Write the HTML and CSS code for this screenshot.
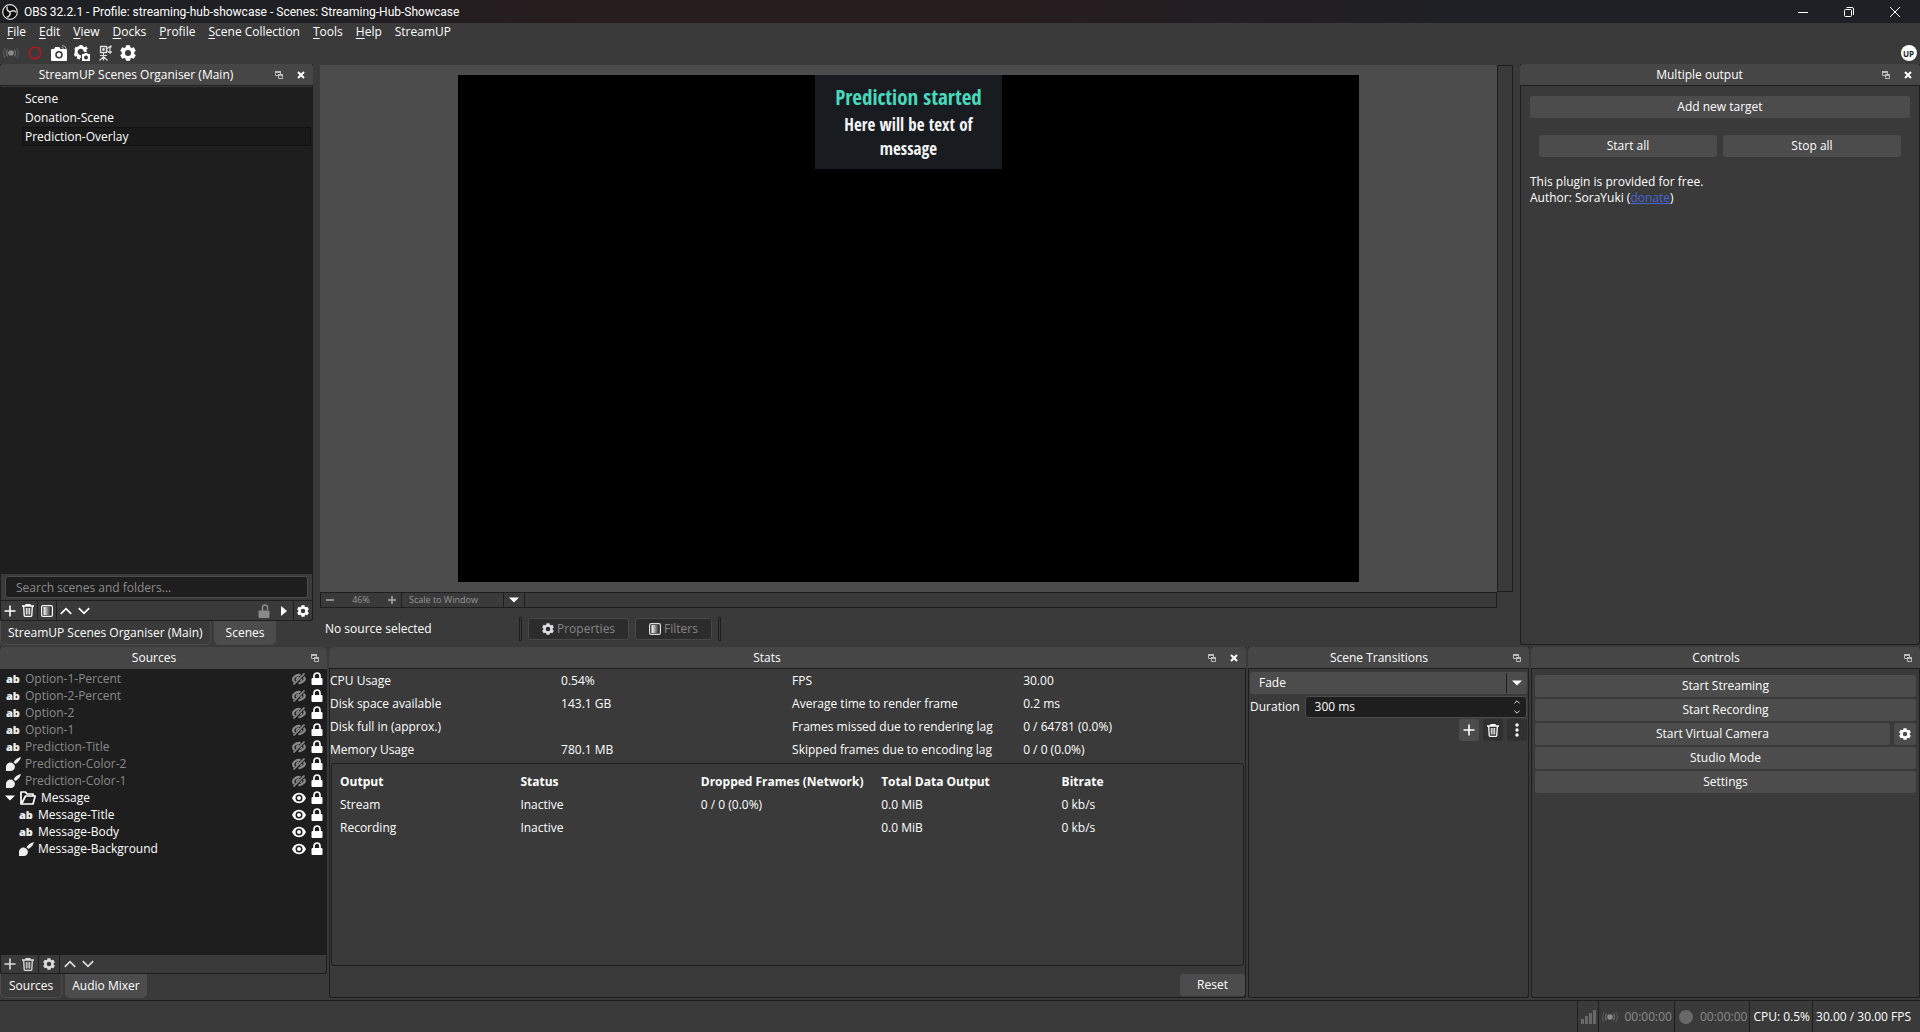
FILE: index.html
```html
<!DOCTYPE html>
<html lang="en">
<head>
<meta charset="utf-8">
<title>OBS 32.2.1 - Profile: streaming-hub-showcase - Scenes: Streaming-Hub-Showcase</title>
<link rel="stylesheet" href="styles.css">
</head>
<body>
<svg class="sprite" aria-hidden="true">
  <defs>
    <linearGradient id="fade"><stop offset="0" stop-color="#fff"/><stop offset="1" stop-color="#333"/></linearGradient>
    <symbol id="gear" viewBox="0 0 16 16"><path fill="currentColor" fill-rule="evenodd" d="M6 .2h4l.5 2.200 1.100.6 2.200-.7 2 3.400L14.200 7.200v1.600l1.600 1.500-2 3.400-2.200-.7-1.100.6-.5 2.200H6l-.5-2.200-1.100-.6-2.200.7-2-3.400 1.600-1.500V7.200L.2 5.700l2-3.400 2.200.7 1.100-.6zM8 5a3 3 0 1 0 0 6 3 3 0 0 0 0-6z"/></symbol>
    <symbol id="float" viewBox="0 0 8 8"><path fill="#bbb" d="M0 0h6v2H0z"/><path fill="none" stroke="#bbb" d="M.5 1v3.500H3M5.500 1v2"/><path fill="#bbb" d="M3 3h5v2H3z"/><path fill="none" stroke="#bbb" d="M3.500 4v3.500h4V4"/></symbol>
    <symbol id="close" viewBox="0 0 8 8"><path stroke="#fff" stroke-width="2" d="M1 1l6 6M7 1L1 7"/></symbol>
    <symbol id="plus" viewBox="0 0 12 12"><path stroke="currentColor" stroke-width="1.600" d="M6 .5v11M.5 6h11"/></symbol>
    <symbol id="trash" viewBox="0 0 12 13"><path fill="none" stroke="currentColor" stroke-width="1.300" d="M0 2h12M4 1.500V.7h4v.8M1.700 2.500l.5 9q0 .8.8.8h6q.8 0 .8-.8l.5-9"/><path stroke="currentColor" d="M4.300 4v6.500M6 4v6.500M7.700 4v6.500"/></symbol>
    <symbol id="filter" viewBox="0 0 12 12"><rect x=".6" y=".6" width="10.800" height="10.800" rx="1.500" fill="none" stroke="currentColor" stroke-width="1.200"/><path fill="url(#fade)" d="M2.500 2h7v8h-7z"/></symbol>
    <symbol id="up" viewBox="0 0 12 8"><path fill="none" stroke="currentColor" stroke-width="1.700" d="M.8 6.800L6 1.600l5.200 5.200"/></symbol>
    <symbol id="down" viewBox="0 0 12 8"><path fill="none" stroke="currentColor" stroke-width="1.700" d="M.8 1.200L6 6.400l5.200-5.200"/></symbol>
    <symbol id="caret" viewBox="0 0 10 6"><path fill="#fff" d="M0 .5h10L5 5.500z"/></symbol>
    <symbol id="lock" viewBox="0 0 12 13"><path fill="none" stroke="currentColor" stroke-width="1.700" d="M3 7V4a3 3 0 0 1 6 0v3"/><rect x=".5" y="6" width="11" height="7" rx="1" fill="currentColor"/></symbol>
    <symbol id="unlock" viewBox="0 0 12 14"><path fill="none" stroke="currentColor" stroke-width="1.500" d="M4.500 7V3.500a2.500 2.500 0 0 1 5 0V6"/><rect x=".5" y="6.500" width="11" height="7.500" rx="1" fill="currentColor"/></symbol>
    <symbol id="eye" viewBox="0 0 14 12"><path fill="currentColor" fill-rule="evenodd" d="M7 .8c3.500 0 5.800 2.400 7 5.200-1.200 2.800-3.500 5.200-7 5.200S1.200 8.800 0 6C1.200 3.200 3.500.8 7 .8zm0 1.700a3.500 3.500 0 1 0 0 7 3.500 3.500 0 0 0 0-7z"/><circle cx="7" cy="6" r="2" fill="currentColor"/></symbol>
    <symbol id="hidden" viewBox="0 0 14 12"><path fill="none" stroke="currentColor" stroke-width="2.200" d="M2.500 9C.5 7 .8 5.500 2.500 3.800S6.500 1.600 8.500 2M11.500 4Q14.200 6 11.500 8.200T6.500 10"/><path stroke="currentColor" stroke-width="1.700" d="M1.500 11.500L12.500.5"/><path fill="none" stroke="currentColor" stroke-width="1.500" d="M4.600 7q-.3-2.500 2.500-3M8.500 8l1.500-2"/></symbol>
    <symbol id="brush" viewBox="0 0 15 14"><path fill="currentColor" d="M15 0c-3 .6-5.600 2.600-7.400 5.200l2 1.900C12.200 5.200 14.500 2.900 15 0zM4.500 5.500C1.500 5.500 0 8 0 10v4h4c3.800 0 5.300-2.300 4.800-5.300C8 7 6.500 5.500 4.500 5.500z"/></symbol>
    <symbol id="folder" viewBox="0 0 16 14"><path fill="none" stroke="currentColor" stroke-width="1.700" stroke-linejoin="round" d="M13 5V3H7L5.500 1H1v12h12l2.200-8H5.500L2 12"/></symbol>
    <symbol id="live" viewBox="0 0 16 12"><circle cx="8" cy="6" r="2.800" fill="currentColor"/><path fill="none" stroke="currentColor" stroke-width="1.200" opacity=".6" d="M4.500 2.500q-2 3.500 0 7M11.500 2.500q2 3.500 0 7"/><path fill="none" stroke="currentColor" stroke-width="1.200" opacity=".35" d="M2.200 1q-3 5 0 10M13.800 1q3 5 0 10"/></symbol>
    <symbol id="camera" viewBox="0 0 16 16"><path fill="#fff" fill-rule="evenodd" d="M1 4h2l1.300-2h4L9.500 4H15q1 0 1 1v10q0 1-1 1H1q-1 0-1-1V5q0-1 1-1zm7 2a3.800 3.800 0 1 0 0 7.600A3.800 3.800 0 0 0 8 6z"/><circle cx="8" cy="9.800" r="2.200" fill="#fff"/><path fill="none" stroke="#aaa" d="M10.500 2.500q2 0 2.200 1.500M11 .5q4 0 4.500 4"/></symbol>
    <symbol id="gearcam" viewBox="0 0 16 16"><path fill="none" stroke="#fff" stroke-width="3" d="M6.800 11.500A4.600 4.600 0 1 1 11.300 7"/><path stroke="#fff" stroke-width="3" d="M7 3V0M3.500 4.500L1 3M3 8.500L.5 10.500M10.500 4L13 2.500M5.500 11l-1.500 3"/><path fill="#fff" fill-rule="evenodd" d="M8 9h2l.8-1h2.400l.8 1h2v7H8zm4 1.500a2 2 0 1 0 0 4 2 2 0 0 0 0-4z"/></symbol>
    <symbol id="stand" viewBox="0 0 14 16"><path fill="none" stroke="#ddd" stroke-width="1.300" d="M2.500 1.500h6v6h-6z"/><circle cx="5.500" cy="4.500" r="1.400" fill="#ddd"/><path fill="none" stroke="#ddd" stroke-width="1.200" d="M8.500 5.500l3.500 2.500V1.500L8.500 4M13 .5v2M13 6v2M5.500 7.500v8M2 10.500h7M1.500 15.500l4-4 4 4"/></symbol>
  </defs>
</svg>

<div class="app">
  <header class="titlebar">
    <svg class="logo" viewBox="0 0 16 16"><circle cx="8" cy="8" r="7.300" fill="#0c0c0c" stroke="#ddd" stroke-width="1.200"/><g fill="none" stroke="#ddd" stroke-width="1.500"><path id="blade" d="M5.200 2.600C4.300 5 5.500 7.300 8 8"/><path d="M5.200 2.600C4.300 5 5.500 7.300 8 8" transform="rotate(120 8 8)"/><path d="M5.200 2.600C4.300 5 5.500 7.300 8 8" transform="rotate(240 8 8)"/></g></svg>
    <h1>OBS 32.2.1 - Profile: streaming-hub-showcase - Scenes: Streaming-Hub-Showcase</h1>
    <div class="window-controls">
      <button aria-label="Minimize"><svg width="10" height="10"><path stroke="#fff" d="M0 5.500h10"/></svg></button>
      <button aria-label="Restore"><svg width="10" height="10"><rect x=".5" y="2.500" width="7" height="7" rx="1" fill="none" stroke="#fff"/><path fill="none" stroke="#fff" d="M2.500.5H8q1.500 0 1.500 1.500v6"/></svg></button>
      <button aria-label="Close"><svg width="10" height="10"><path stroke="#fff" d="M0 0l10 10M10 0L0 10"/></svg></button>
    </div>
  </header>

  <nav class="menubar">
    <button><u>F</u>ile</button><button><u>E</u>dit</button><button><u>V</u>iew</button><button><u>D</u>ocks</button><button><u>P</u>rofile</button><button><u>S</u>cene Collection</button><button><u>T</u>ools</button><button><u>H</u>elp</button><button>StreamUP</button>
  </nav>

  <div class="main-toolbar">
    <button class="dim wide" aria-label="Stream"><svg width="16" height="12"><use href="#live"/></svg></button>
    <button class="wide" aria-label="Record"><svg width="14" height="14"><circle cx="7" cy="7" r="5.700" fill="none" stroke="#c1121c" stroke-width="1.500"/></svg></button>
    <button aria-label="Screenshot"><svg width="16" height="16"><use href="#camera"/></svg></button>
    <button aria-label="Screenshot settings"><svg width="16" height="16"><use href="#gearcam"/></svg></button>
    <button aria-label="Virtual camera"><svg width="14" height="16"><use href="#stand"/></svg></button>
    <button aria-label="Settings"><svg width="16" height="16"><use href="#gear"/></svg></button>
    <button class="streamup" aria-label="StreamUP"><span>UP</span></button>
  </div>

  <main class="upper">
    <section class="side-column">
      <div class="dock scenes">
        <header class="dock-title"><h2>StreamUP Scenes Organiser (Main)</h2><button aria-label="Float"><svg width="8" height="8"><use href="#float"/></svg></button><button aria-label="Close"><svg width="8" height="8"><use href="#close"/></svg></button></header>
        <ul class="scene-list"><li>Scene</li><li>Donation-Scene</li><li class="selected">Prediction-Overlay</li></ul>
        <div class="search"><input type="text" placeholder="Search scenes and folders..." aria-label="Search scenes and folders"></div>
        <div class="dock-tools">
          <button aria-label="Add"><svg width="12" height="12"><use href="#plus"/></svg></button>
          <button aria-label="Remove"><svg width="12" height="13"><use href="#trash"/></svg></button>
          <i></i>
          <button aria-label="Filters"><svg width="12" height="12"><use href="#filter"/></svg></button>
          <i></i>
          <button aria-label="Up"><svg width="12" height="8"><use href="#up"/></svg></button>
          <button aria-label="Down"><svg width="12" height="8"><use href="#down"/></svg></button>
          <button class="push dim" aria-label="Lock"><svg width="12" height="14"><use href="#unlock"/></svg></button>
          <button aria-label="Transitions"><svg width="6" height="10"><path fill="#fff" d="M0 0l6 5-6 5z"/></svg></button>
          <i></i>
          <button aria-label="Settings"><svg width="12" height="12"><use href="#gear"/></svg></button>
        </div>
      </div>
      <div class="tabs"><button class="active">StreamUP Scenes Organiser (Main)</button><button>Scenes</button></div>
    </section>

    <section class="center">
      <div class="preview-row">
        <div class="preview-column">
          <div class="preview"><div class="canvas"><div class="overlay"><h3>Prediction started</h3><p>Here will be text of message</p></div></div></div>
          <div class="zoombar">
            <button aria-label="Zoom out"><svg width="8" height="8"><path stroke="#aaa" stroke-width="1.500" d="M0 4h8"/></svg></button>
            <output>46%</output>
            <button aria-label="Zoom in"><svg width="8" height="8"><path stroke="#aaa" stroke-width="1.500" d="M0 4h8M4 0v8"/></svg></button>
            <span class="scale">Scale to Window</span>
            <button class="scale-menu" aria-label="Scaling mode"><svg width="10" height="6"><use href="#caret"/></svg></button>
          </div>
        </div>
        <div class="vscroll"></div>
      </div>
      <div class="context">
        <span class="source-name">No source selected</span>
        <i></i>
        <button disabled><svg width="12" height="12"><use href="#gear"/></svg>Properties</button>
        <button disabled><svg width="12" height="12"><use href="#filter"/></svg>Filters</button>
        <i></i>
      </div>
    </section>

    <section class="dock outputs">
      <header class="dock-title"><h2>Multiple output</h2><button aria-label="Float"><svg width="8" height="8"><use href="#float"/></svg></button><button aria-label="Close"><svg width="8" height="8"><use href="#close"/></svg></button></header>
      <div class="outputs-body">
        <button class="btn">Add new target</button>
        <div class="pair"><button class="btn">Start all</button><button class="btn">Stop all</button></div>
        <p>This plugin is provided for free.<br>Author: SoraYuki (<a href="#">donate</a>)</p>
      </div>
    </section>
  </main>

  <div class="lower">
    <section class="side-column sources-column">
      <div class="dock sources">
        <header class="dock-title"><h2>Sources</h2><button aria-label="Float"><svg width="8" height="8"><use href="#float"/></svg></button></header>
        <ul class="source-list">
          <li class="off"><b>ab</b><span>Option-1-Percent</span><svg width="14" height="12"><use href="#hidden"/></svg><svg class="lk" width="12" height="13"><use href="#lock"/></svg></li>
          <li class="off"><b>ab</b><span>Option-2-Percent</span><svg width="14" height="12"><use href="#hidden"/></svg><svg class="lk" width="12" height="13"><use href="#lock"/></svg></li>
          <li class="off"><b>ab</b><span>Option-2</span><svg width="14" height="12"><use href="#hidden"/></svg><svg class="lk" width="12" height="13"><use href="#lock"/></svg></li>
          <li class="off"><b>ab</b><span>Option-1</span><svg width="14" height="12"><use href="#hidden"/></svg><svg class="lk" width="12" height="13"><use href="#lock"/></svg></li>
          <li class="off"><b>ab</b><span>Prediction-Title</span><svg width="14" height="12"><use href="#hidden"/></svg><svg class="lk" width="12" height="13"><use href="#lock"/></svg></li>
          <li class="off"><b><svg width="15" height="14"><use href="#brush"/></svg></b><span>Prediction-Color-2</span><svg width="14" height="12"><use href="#hidden"/></svg><svg class="lk" width="12" height="13"><use href="#lock"/></svg></li>
          <li class="off"><b><svg width="15" height="14"><use href="#brush"/></svg></b><span>Prediction-Color-1</span><svg width="14" height="12"><use href="#hidden"/></svg><svg class="lk" width="12" height="13"><use href="#lock"/></svg></li>
          <li class="group"><svg width="10" height="6"><use href="#caret"/></svg><svg width="16" height="14"><use href="#folder"/></svg><span>Message</span><svg width="14" height="12"><use href="#eye"/></svg><svg class="lk" width="12" height="13"><use href="#lock"/></svg></li>
          <li class="child"><b>ab</b><span>Message-Title</span><svg width="14" height="12"><use href="#eye"/></svg><svg class="lk" width="12" height="13"><use href="#lock"/></svg></li>
          <li class="child"><b>ab</b><span>Message-Body</span><svg width="14" height="12"><use href="#eye"/></svg><svg class="lk" width="12" height="13"><use href="#lock"/></svg></li>
          <li class="child"><b><svg width="15" height="14"><use href="#brush"/></svg></b><span>Message-Background</span><svg width="14" height="12"><use href="#eye"/></svg><svg class="lk" width="12" height="13"><use href="#lock"/></svg></li>
        </ul>
        <div class="dock-tools">
          <button aria-label="Add"><svg width="12" height="12"><use href="#plus"/></svg></button>
          <button aria-label="Remove"><svg width="12" height="13"><use href="#trash"/></svg></button>
          <i></i>
          <button aria-label="Properties"><svg width="12" height="12"><use href="#gear"/></svg></button>
          <i></i>
          <button aria-label="Up"><svg width="12" height="8"><use href="#up"/></svg></button>
          <button aria-label="Down"><svg width="12" height="8"><use href="#down"/></svg></button>
        </div>
      </div>
      <div class="tabs"><button class="active">Sources</button><button>Audio Mixer</button></div>
    </section>

    <section class="dock stats">
      <header class="dock-title"><h2>Stats</h2><button aria-label="Float"><svg width="8" height="8"><use href="#float"/></svg></button><button aria-label="Close"><svg width="8" height="8"><use href="#close"/></svg></button></header>
      <table class="summary">
        <tr><td>CPU Usage</td><td>0.54%</td><td>FPS</td><td>30.00</td></tr>
        <tr><td>Disk space available</td><td>143.1 GB</td><td>Average time to render frame</td><td>0.2 ms</td></tr>
        <tr><td>Disk full in (approx.)</td><td></td><td>Frames missed due to rendering lag</td><td>0 / 64781 (0.0%)</td></tr>
        <tr><td>Memory Usage</td><td>780.1 MB</td><td>Skipped frames due to encoding lag</td><td>0 / 0 (0.0%)</td></tr>
      </table>
      <div class="output-box">
        <table>
          <tr><th>Output</th><th>Status</th><th>Dropped Frames (Network)</th><th>Total Data Output</th><th>Bitrate</th></tr>
          <tr><td>Stream</td><td>Inactive</td><td>0 / 0 (0.0%)</td><td>0.0 MiB</td><td>0 kb/s</td></tr>
          <tr><td>Recording</td><td>Inactive</td><td></td><td>0.0 MiB</td><td>0 kb/s</td></tr>
        </table>
      </div>
      <div class="stats-actions"><button class="btn">Reset</button></div>
    </section>

    <section class="dock transitions">
      <header class="dock-title"><h2>Scene Transitions</h2><button aria-label="Float"><svg width="8" height="8"><use href="#float"/></svg></button></header>
      <div class="transitions-body">
        <div class="combo"><select aria-label="Transition"><option>Fade</option></select><span><svg width="10" height="6"><use href="#caret"/></svg></span></div>
        <div class="duration"><label for="duration">Duration</label><div class="spin"><input id="duration" type="text" value="300 ms"><span><svg width="6" height="4"><use href="#up"/></svg><svg width="6" height="4"><use href="#down"/></svg></span></div></div>
        <div class="transition-tools">
          <button class="raised" aria-label="Add"><svg width="12" height="12"><use href="#plus"/></svg></button>
          <button aria-label="Remove"><svg width="12" height="13"><use href="#trash"/></svg></button>
          <button aria-label="More"><svg width="4" height="14" fill="#fff"><circle cx="2" cy="2" r="1.700"/><circle cx="2" cy="7" r="1.700"/><circle cx="2" cy="12" r="1.700"/></svg></button>
        </div>
      </div>
    </section>

    <section class="dock controls">
      <header class="dock-title"><h2>Controls</h2><button aria-label="Float"><svg width="8" height="8"><use href="#float"/></svg></button></header>
      <div class="controls-body">
        <button class="btn">Start Streaming</button>
        <button class="btn">Start Recording</button>
        <div class="camera-row"><button class="btn">Start Virtual Camera</button><button class="btn" aria-label="Virtual camera settings"><svg width="12" height="12"><use href="#gear"/></svg></button></div>
        <button class="btn">Studio Mode</button>
        <button class="btn">Settings</button>
      </div>
    </section>
  </div>

  <footer class="statusbar">
    <div><svg width="15" height="14" fill="#686868"><path d="M0 9h3v5H0zM4 6h3v8H4zM8 3h3v11H8zM12 0h3v14h-3z"/></svg></div>
    <div class="dim"><svg width="16" height="12"><use href="#live"/></svg><span>00:00:00</span></div>
    <div class="dim"><svg width="16" height="14"><circle cx="8" cy="7" r="7" fill="#686868"/></svg><span>00:00:00</span></div>
    <div>CPU: 0.5%</div>
    <div class="fps">30.00 / 30.00 FPS</div>
  </footer>
</div>
</body>
</html>
```
FILE: styles.css
```css
:root {
  --bg: #3a3a3a;
  --header: #464646;
  --raised: #4c4c4c;
  --dark: #1e1e1e;
  --dim: #969696;
}
* { box-sizing: border-box; }
body {
  margin: 0;
  background: var(--bg);
  color: #fff;
  font: 12px/16px "Open Sans", sans-serif;
}
h1, h2, h3, p, ul { margin: 0; padding: 0; font-weight: 400; }
h1, h2 { font-size: 12px; }
ul { list-style: none; }
button {
  border: 0;
  padding: 0;
  background: none;
  color: inherit;
  font: inherit;
  display: flex;
  align-items: center;
  justify-content: center;
}
input, select { font: inherit; color: #fff; border: 0; min-width: 0; outline: 0; }
svg { display: block; flex: none; }
.sprite { position: absolute; width: 0; height: 0; }
.dim { color: #8a8a8a; }

.app { display: flex; flex-direction: column; height: 100vh; min-height: 800px; }

/* Title, menus, toolbar */
.titlebar {
  display: flex;
  align-items: center;
  height: 23px;
  padding-left: 2px;
  background: linear-gradient(90deg, #1f2024 0%, #1f2023 15%, #271c1e 30%, #271c1e 50%, #1f2025 75%);
}
.titlebar .logo { width: 16px; height: 16px; margin-right: 6px; }
.titlebar h1 { font-family: Roboto, "Open Sans", sans-serif; flex: 1; }
.window-controls { display: flex; }
.window-controls button { width: 46px; height: 20px; padding-right: 4px; }
.menubar { display: flex; height: 18px; padding-left: 7px; gap: 13px; }
.menubar u { text-underline-offset: 2px; }
.main-toolbar { display: flex; align-items: center; height: 23px; }
.main-toolbar button { width: 23px; height: 22px; }
.main-toolbar .wide { width: 25px; }
.main-toolbar .wide:first-child { width: 22px; }
.main-toolbar .streamup { margin-left: auto; }
.streamup span {
  width: 16px; height: 16px; border-radius: 50%;
  background: #fff; color: #222;
  font: 700 8px/17px "Open Sans", sans-serif;
}

/* Docks */
.upper { display: flex; flex: 1; min-height: 0; }
.lower { display: flex; flex: none; height: 351px; margin-top: 2px; gap: 2px; }
.side-column { display: flex; flex-direction: column; width: 313px; flex: none; }
.sources-column { width: 327px; }
.dock { display: flex; flex-direction: column; border: 1px solid var(--dark); border-top: 0; border-radius: 0 0 3px 3px; min-height: 0; }
.side-column .dock { flex: 1; }
.dock-title {
  display: flex;
  align-items: center;
  flex: none;
  height: 22px;
  margin: 0 -1px;
  padding: 0 1px 0 4px;
  background: var(--header);
  border-bottom: 1px solid var(--dark);
  border-radius: 3px 3px 0 0;
}
.dock-title h2 { flex: 1; text-align: center; }
.dock-title button { width: 22px; height: 20px; }
.btn { height: 22px; border-radius: 3px; background: var(--raised); }
.dock-tools { display: flex; align-items: center; flex: none; height: 20px; border-top: 1px solid var(--dark); }
.dock-tools button { width: 18px; height: 19px; }
.dock-tools i { width: 1px; height: 19px; background: var(--dark); }
.dock-tools .push { margin-left: auto; }
.tabs { display: flex; flex: none; gap: 3px; height: 24px; }
.tabs button { padding: 0 12px; background: var(--raised); border-radius: 0 0 5px 5px; }
.tabs .active { padding: 0 7px; background: none; border: 1px solid #4c4c4c; border-top: 0; }
.sources-column .tabs .active { padding: 0 8px; }
.sources-column .tabs button { padding: 0 7px; }

.scene-list { flex: 1; margin-top: 1px; padding: 2px 1px 0 21px; background: var(--dark); min-height: 0; }
.scene-list li { height: 19px; padding: 0 2px; line-height: 17px; border: 1px solid transparent; }
.scene-list .selected { background: #191919; border-color: #121212; }
.search { padding: 2px 4px; }
.search input {
  display: block; width: 100%; height: 22px; padding: 0 10px;
  background: var(--dark); border: 1px solid #4c4c4c; border-radius: 3px;
}
.search input::placeholder { color: #8c8c8c; opacity: 1; }
.scenes .push { margin-right: 2px; }

/* Preview */
.center { display: flex; flex-direction: column; flex: 1; min-width: 0; padding: 1px 7px 0; }
.preview-row { display: flex; flex: 1; min-height: 0; }
.preview-column { display: flex; flex-direction: column; flex: 1; min-width: 0; }
.preview { display: flex; justify-content: center; flex: 1; min-height: 0; padding: 10px 0; background: var(--raised); }
.canvas { aspect-ratio: 16 / 9; background: #000; display: flex; justify-content: center; align-items: flex-start; }
.overlay { width: 187px; height: 94px; padding-top: 8px; background: #181b20; text-align: center; font-family: "Open Sans Condensed", "Open Sans", sans-serif; }
.overlay h3 { font-size: 21px; line-height: 28px; font-weight: 700; color: #48d9bc; }
.overlay p { padding: 2px 26px; font-size: 17px; line-height: 24px; font-weight: 700; color: #f4f4f6; }
.vscroll { width: 16px; margin-bottom: 16px; border: 1px solid var(--dark); }
.zoombar { display: flex; align-items: center; flex: none; height: 16px; border: 1px solid var(--dark); color: var(--dim); font-size: 9px; line-height: 14px; }
.zoombar button { width: 18px; height: 14px; }
.zoombar output { width: 44px; text-align: center; }
.zoombar .scale { width: 102px; padding-left: 7px; border-left: 1px solid var(--dark); }
.zoombar .scale-menu { width: 22px; border: solid var(--dark); border-width: 0 1px; }
.context { display: flex; align-items: center; flex: none; height: 37px; padding: 8px 0 4px 5px; gap: 6px; }
.context i { width: 3px; height: 24px; border: 1px solid var(--dark); }
.source-name { width: 188px; }
.context button { height: 22px; padding: 0 13px; gap: 3px; color: #858585; background: #2c2c2c; border: 1px solid #484848; border-radius: 3px; }
.context button svg { color: #ddd; }

/* Multiple output */
.outputs { width: 400px; flex: none; }
.outputs-body { padding: 10px 9px; }
.outputs-body > .btn { width: 100%; }
.pair { display: flex; gap: 6px; padding: 17px 9px; }
.pair .btn { flex: 1; }
.outputs a { color: #4766d8; }

/* Sources */
.source-list { flex: 1; padding-top: 1px; background: var(--dark); min-height: 0; }
.sources .dock-title { border-bottom: 0; }
.source-list li { display: flex; align-items: center; height: 17px; padding: 0 3px 0 5px; }
.source-list b { width: 19px; font: 800 11px/16px "Open Sans", sans-serif; color: #eee; }
.source-list span { flex: 1; }
.source-list .off { color: #8a8a8a; }
.source-list .lk { margin-left: 5px; color: #fff; }
.source-list .child { padding-left: 18px; }
.source-list .group { gap: 5px; padding-left: 4px; }
.source-list .group .lk { margin-left: 0; }
.sources .dock-tools { height: 18px; border-top: 0; }
.sources .dock-tools button { width: 18px; height: 18px; }
.sources .dock-tools i { margin: 0 1px; }
.sources .dock-tools { color: #ddd; }

/* Stats */
.stats { flex: 1; min-width: 0; }
table { width: 100%; table-layout: fixed; border-collapse: collapse; }
td, th { height: 23px; padding: 0; text-align: left; white-space: nowrap; }
.summary td { width: 25%; }
.summary td:last-child { width: 24%; }
.output-box { flex: 1; margin: 2px 1px 0; padding: 6px 1px 0 8px; border: 1px solid var(--dark); border-radius: 3px; }
.stats-actions { display: flex; justify-content: flex-end; padding: 8px 0 1px; }
.stats-actions .btn { width: 65px; }

/* Transitions */
.transitions { width: 281px; flex: none; }
.transitions-body { padding: 3px 1px; }
.combo { display: flex; height: 22px; background: var(--raised); border-radius: 3px; }
.combo select { flex: 1; padding: 0 9px; background: none; appearance: none; }
.combo span { display: flex; align-items: center; justify-content: center; width: 21px; margin: 1px 0; border-left: 1px solid var(--dark); }
.duration { display: flex; align-items: center; gap: 5px; margin-top: 2px; }
.spin { display: flex; flex: 1; height: 22px; background: var(--dark); border: 1px solid #4c4c4c; border-radius: 3px; }
.spin input { flex: 1; padding: 0 9px; background: none; }
.spin span { display: flex; flex-direction: column; justify-content: space-between; padding: 3px 6px; }
.transition-tools { display: flex; justify-content: flex-end; gap: 4px; margin-top: 1px; }
.transition-tools button { width: 20px; height: 22px; border-radius: 3px; background: #303030; }
.transition-tools .raised { background: var(--raised); }

/* Controls */
.controls { width: 389px; flex: none; }
.controls-body { display: flex; flex-direction: column; gap: 2px; padding: 6px 3px; }
.camera-row { display: flex; gap: 4px; }
.camera-row .btn:first-child { flex: 1; }
.camera-row .btn:last-child { width: 22px; }

/* Status bar */
.statusbar { display: flex; justify-content: flex-end; flex: none; height: 32px; margin-top: 2px; border-top: 1px solid var(--dark); }
.statusbar div { display: flex; align-items: center; gap: 6px; padding: 0 2px 0 3px; border-left: 1px solid var(--dark); }
.statusbar .fps { padding-right: 9px; }
```
